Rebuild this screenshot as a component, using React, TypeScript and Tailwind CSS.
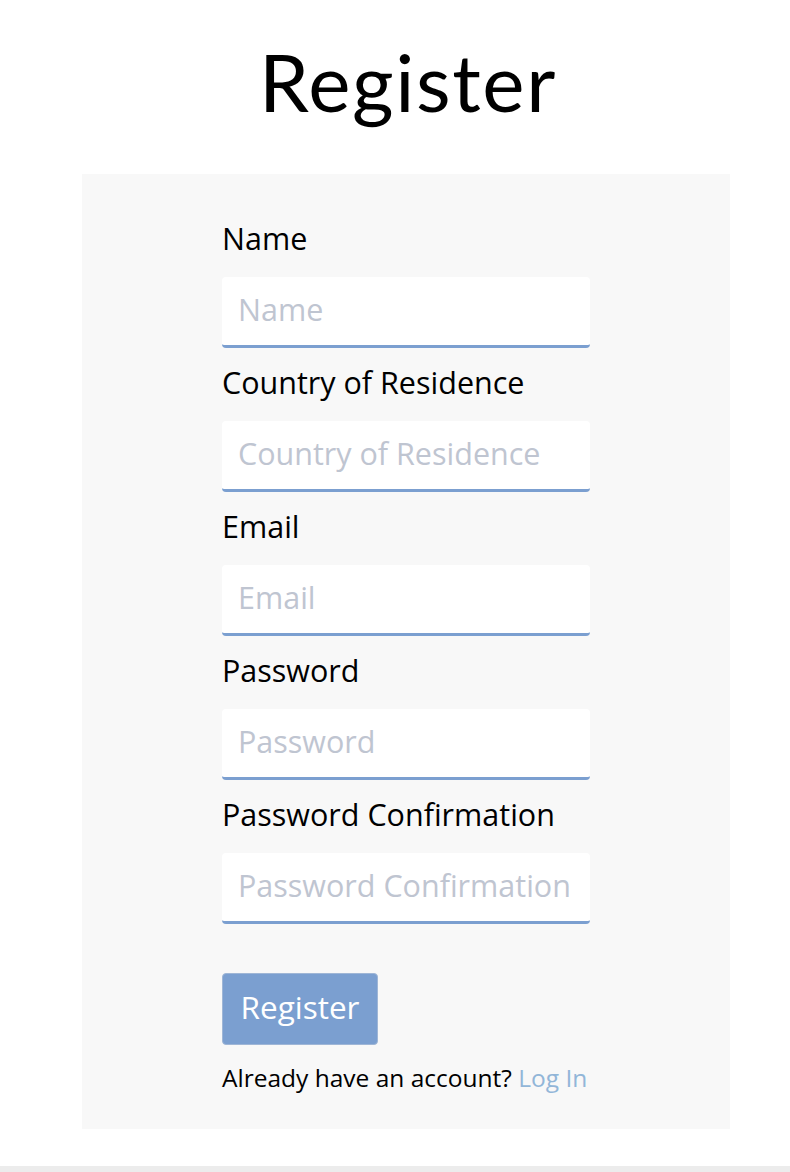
import React from "react";

const body = { fontFamily: '"Open Sans", "Lato", sans-serif' };
const title = { fontFamily: '"Lato", "Open Sans", sans-serif' };

function Field({ label }: { label: string }) {
  return (
    <div className="flex flex-col">
      <label className="text-[30.5px] leading-[36px] text-black pt-[16px] pb-[21px]">{label}</label>
      <input
        placeholder={label}
        className="h-[71px] w-full rounded-[4px] border-b-[3px] border-[#7b9fd0] bg-white px-[16px] pb-[5px] text-[30.5px] text-black outline-none placeholder:text-[#bfc5d1]"
      />
    </div>
  );
}

export default function App() {
  return (
    <div className="min-h-[1172px] bg-white flex flex-col" style={body}>
      <h1
        className="ml-[84px] w-[648px] text-center text-[80px] leading-[96px] tracking-[1.6px] text-black pt-[33px] pb-[45px]"
        style={title}
      >
        Register
      </h1>
      <div className="ml-[82px] w-[648px] bg-[#f8f8f8] px-[140px] pt-[30px] pb-[36px]">
        <Field label="Name" />
        <Field label="Country of Residence" />
        <Field label="Email" />
        <Field label="Password" />
        <Field label="Password Confirmation" />
        <button className="mt-[49px] h-[72px] w-[156px] rounded-[4px] border border-[#9fb6d6] bg-[#7b9fd0] pb-[5px] text-[31.5px] text-white">
          Register
        </button>
        <p className="mt-[18px] text-[24.5px] leading-[30px] text-black">
          Already have an account? <a className="text-[#92b6d8]">Log In</a>
        </p>
      </div>
      <div className="flex-1" />
      <div className="h-[6px] bg-[#ececec]" />
    </div>
  );
}
